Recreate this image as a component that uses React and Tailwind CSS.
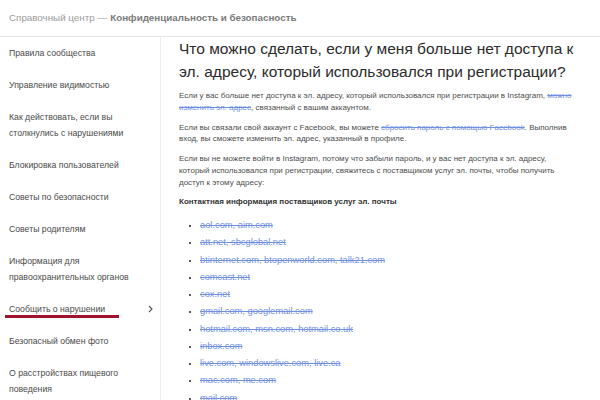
const navItems = [
  'Правила сообщества',
  'Управление видимостью',
  'Как действовать, если вы столкнулись с нарушениями',
  'Блокировка пользователей',
  'Советы по безопасности',
  'Советы родителям',
  'Информация для правоохранительных органов',
  'Сообщить о нарушении',
  'Безопасный обмен фото',
  'О расстройствах пищевого поведения',
];

const providers = [
  'aol.com, aim.com',
  'att.net, sbcglobal.net',
  'btinternet.com, btopenworld.com, talk21.com',
  'comcast.net',
  'cox.net',
  'gmail.com, googlemail.com',
  'hotmail.com, msn.com, hotmail.co.uk',
  'inbox.com',
  'live.com, windowslive.com, live.ca',
  'mac.com, me.com',
  'mail.com',
];

function Link({ children }) {
  return <span className="text-[#7290e2] line-through">{children}</span>;
}

export default function App() {
  return (
    <div className="w-[600px] h-[400px] overflow-hidden bg-white font-['Liberation_Sans',Arial,sans-serif]">
      <header className="h-[37px] border-b border-[#e6e6e6] flex items-center pl-[9px] pt-[1px] text-[9.8px] text-[#9a9a9a]">
        <span>Справочный центр —</span>
        <span className="ml-[3px] font-bold text-[#7a7a7a]">Конфиденциальность и безопасность</span>
      </header>
      <div className="flex">
        <nav className="w-[161px] shrink-0 border-r border-[#ececec] min-h-[363px]">
          {navItems.map((item) => {
            const active = item === 'Сообщить о нарушении';
            return (
              <div key={item} className="relative flex items-center justify-between py-[8px] pl-[9px] pr-[7px] text-[8.7px] leading-[16px] text-[#4a4a4a]">
                <span className="w-[120px]">{item}</span>
                {active && (
                  <>
                    <svg width="5" height="8" viewBox="0 0 5 8">
                      <path d="M1 1l3 3-3 3" fill="none" stroke="#555" strokeWidth="1.1" />
                    </svg>
                    <span className="absolute left-[5px] top-[22px] w-[114px] h-[3px] bg-[#a1122e]" />
                  </>
                )}
              </div>
            );
          })}
        </nav>
        <main className="pl-[18px] pr-[22px] text-[#4d4d4d]">
          <h1 className="text-[15.5px] leading-[23px] text-[#2b2b2b]">
            Что можно сделать, если у меня больше нет доступа к эл. адресу, который использовался при регистрации?
          </h1>
          <div className="mt-[7px] text-[8px] leading-[11.75px] space-y-[8px]">
            <p>
              Если у вас больше нет доступа к эл. адресу, который использовался при регистрации в Instagram, <Link>можно изменить эл. адрес</Link>, связанный с вашим аккаунтом.
            </p>
            <p>
              Если вы связали свой аккаунт с Facebook, вы можете <Link>сбросить пароль с помощью Facebook</Link>. Выполнив вход, вы сможете изменить эл. адрес, указанный в профиле.
            </p>
            <p>
              Если вы не можете войти в Instagram, потому что забыли пароль, и у вас нет доступа к эл. адресу, который использовался при регистрации, свяжитесь с поставщиком услуг эл. почты, чтобы получить доступ к этому адресу:
            </p>
            <p className="font-bold text-[#333]">Контактная информация поставщиков услуг эл. почты</p>
          </div>
          <ul className="mt-[9px] pl-[21px] list-disc text-[9.3px] leading-[17.25px] marker:text-[#222] marker:text-[8px]">
            {providers.map((p) => (
              <li key={p}>
                <Link>{p}</Link>
              </li>
            ))}
          </ul>
        </main>
      </div>
    </div>
  );
}
